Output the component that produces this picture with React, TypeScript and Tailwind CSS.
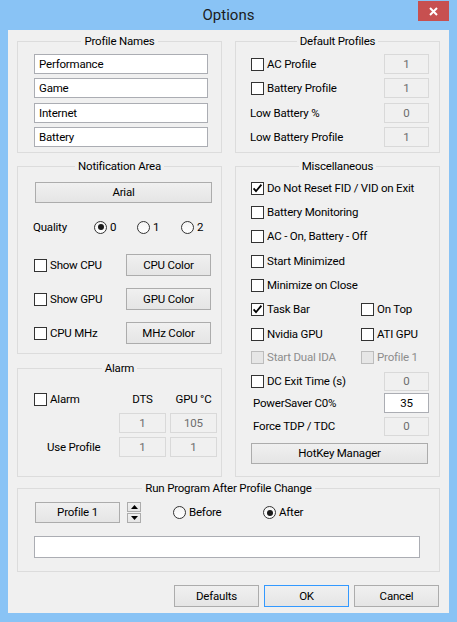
import React from 'react';

// Win8-style "Options" dialog

function CheckBox({ checked = false, disabled = false }: { checked?: boolean; disabled?: boolean }) {
  return (
    <span
      className={`flex h-[13px] w-[13px] shrink-0 items-center justify-center border ${
        disabled ? 'border-[#bcbcbc] bg-[#e6e6e6]' : 'border-[#333333] bg-white'
      }`}
    >
      {checked && (
        <svg width="11" height="11" viewBox="0 0 11 11">
          <path d="M1.6 5.4 L4 8.2 L9.4 1.6" fill="none" stroke="#000" strokeWidth="1.8" />
        </svg>
      )}
    </span>
  );
}

function CheckItem({
  label,
  checked,
  disabled,
  className = ''
}: {
  label: string;
  checked?: boolean;
  disabled?: boolean;
  className?: string;
}) {
  return (
    <label className={`flex items-center gap-[3px] whitespace-nowrap ${className}`}>
      <CheckBox checked={checked} disabled={disabled} />
      <span className={disabled ? 'text-[#8d8d8d]' : ''}>{label}</span>
    </label>
  );
}

function Radio({ checked = false }: { checked?: boolean }) {
  return (
    <span className="flex h-[13px] w-[13px] shrink-0 items-center justify-center rounded-full border border-[#333333] bg-linear-to-b from-[#f4f4f4] to-white">
      {checked && <span className="h-[6px] w-[6px] rounded-full bg-[#1a1a1a]" />}
    </span>
  );
}

function Btn({
  children,
  className = '',
  primary = false
}: {
  children: React.ReactNode;
  className?: string;
  primary?: boolean;
}) {
  return (
    <button
      className={`flex shrink-0 items-center justify-center border bg-linear-to-b from-[#f0f0f0] to-[#e5e5e5] text-black ${
        primary ? 'border-[#3399ff]' : 'border-[#acacac]'
      } ${className}`}
    >
      {children}
    </button>
  );
}

function Field({
  value = '',
  disabled = false,
  left = false,
  className = ''
}: {
  value?: string;
  disabled?: boolean;
  left?: boolean;
  className?: string;
}) {
  return (
    <div
      className={`flex shrink-0 items-center border ${
        disabled ? 'border-[#d9d9d9] bg-[#f0f0f0] text-[#6d6d6d]' : 'border-[#abadb3] bg-white text-black'
      } ${left ? 'justify-start pl-[4px]' : 'justify-center'} ${className}`}
    >
      {value}
    </div>
  );
}

function Group({ title, className = '', children }: { title: string; className?: string; children: React.ReactNode }) {
  return (
    <fieldset className={`min-w-0 border border-[#dcdcdc] ${className}`}>
      <legend className="mx-auto px-[3px] leading-[15px]">{title}</legend>
      {children}
    </fieldset>
  );
}

function Spin() {
  return (
    <div className="flex h-[21px] w-[14px] shrink-0 flex-col gap-px">
      <div className="flex flex-1 items-center justify-center border border-[#acacac] bg-linear-to-b from-[#f0f0f0] to-[#e5e5e5]">
        <svg width="7" height="4" viewBox="0 0 7 4">
          <path d="M0 4 L3.5 0 L7 4 Z" fill="#000" />
        </svg>
      </div>
      <div className="flex flex-1 items-center justify-center border border-[#acacac] bg-linear-to-b from-[#f0f0f0] to-[#e5e5e5]">
        <svg width="7" height="4" viewBox="0 0 7 4">
          <path d="M0 0 L7 0 L3.5 4 Z" fill="#000" />
        </svg>
      </div>
    </div>
  );
}

const nameGaps = ['', 'mt-[4px]', 'mt-[5px]', 'mt-[4px]'];
const profileNames = ['Performance', 'Game', 'Internet', 'Battery'];

const miscGaps = ['', 'mt-[4px]', 'mt-[4px]', 'mt-[5px]', 'mt-[4px]', 'mt-[4px]', 'mt-[5px]', 'mt-[3px]', 'mt-[4px]', 'mt-[2px]', 'mt-[3px]'];

export default function App() {
  return (
    <div className="flex h-[622px] w-[457px] flex-col bg-[#89c3f5] font-['Roboto','Liberation_Sans',sans-serif] text-[11.5px] leading-[15px] tracking-[-0.2px] text-black">
      {/* Title bar */}
      <div className="relative flex h-[30px] shrink-0 items-center justify-center">
        <span className="text-[15px] leading-[20px] tracking-normal text-[#1b1b1b]">Options</span>
        <div className="absolute top-[1px] right-[8px] flex h-[20px] w-[31px] items-center justify-center bg-[#c75050]">
          <svg width="9" height="9" viewBox="0 0 9 9">
            <path d="M1 1 L8 8 M8 1 L1 8" stroke="#fff" strokeWidth="2" />
          </svg>
        </div>
      </div>

      {/* Client area */}
      <div className="mx-[8px] flex h-[583px] flex-col bg-[#f0f0f0] px-[9px] pt-[4px]">
        <div className="grid grid-cols-2 gap-x-[13px]">
          <Group title="Profile Names" className="h-[119px]">
            <div className="flex flex-col pt-[5px] pl-[16px]">
              {profileNames.map((n, i) => (
                <Field key={n} value={n} left className={`h-[20px] w-[174px] ${nameGaps[i]}`} />
              ))}
            </div>
          </Group>

          <Group title="Default Profiles" className="h-[119px]">
            <div className="flex flex-col pt-[5px] pr-[10px] pl-[15px]">
              <div className="flex h-[20px] items-center justify-between">
                <CheckItem label="AC Profile" />
                <Field value="1" disabled className="h-[20px] w-[45px]" />
              </div>
              <div className="mt-[4px] flex h-[20px] items-center justify-between">
                <CheckItem label="Battery Profile" />
                <Field value="1" disabled className="h-[20px] w-[45px]" />
              </div>
              <div className="mt-[5px] flex h-[20px] items-center justify-between">
                <span className="-ml-px">Low Battery %</span>
                <Field value="0" disabled className="h-[20px] w-[45px]" />
              </div>
              <div className="mt-[4px] flex h-[20px] items-center justify-between">
                <span className="-ml-px">Low Battery Profile</span>
                <Field value="1" disabled className="h-[20px] w-[45px]" />
              </div>
            </div>
          </Group>
        </div>

        <div className="mt-[6px] grid grid-cols-2 gap-x-[13px]">
          <div className="flex flex-col gap-[7px]">
            <Group title="Notification Area" className="h-[195px]">
              <div className="flex flex-col pt-[8px] pl-[17px]">
                <Btn className="h-[21px] w-[177px]">Arial</Btn>
                <div className="mt-[14px] -ml-[2px] flex h-[20px] items-center">
                  <span className="w-[61px]">Quality</span>
                  <label className="flex w-[43px] items-center gap-[3px]">
                    <Radio checked />0
                  </label>
                  <label className="flex w-[44px] items-center gap-[3px]">
                    <Radio />1
                  </label>
                  <label className="flex items-center gap-[3px]">
                    <Radio />2
                  </label>
                </div>
                <div className="mt-[17px] -ml-px flex h-[22px] items-center">
                  <CheckItem label="Show CPU" className="w-[92px]" />
                  <Btn className="h-[22px] w-[85px]">CPU Color</Btn>
                </div>
                <div className="mt-[12px] -ml-px flex h-[22px] items-center">
                  <CheckItem label="Show GPU" className="w-[92px]" />
                  <Btn className="h-[22px] w-[85px]">GPU Color</Btn>
                </div>
                <div className="mt-[12px] -ml-px flex h-[22px] items-center">
                  <CheckItem label="CPU MHz" className="w-[92px]" />
                  <Btn className="h-[22px] w-[85px]">MHz Color</Btn>
                </div>
              </div>
            </Group>

            <Group title="Alarm" className="h-[116px]">
              <div className="grid auto-rows-[20px] grid-cols-[97px_47px_47px] items-center gap-x-[4px] gap-y-[4px] pt-[13px]">
                <CheckItem label="Alarm" className="pl-[16px]" />
                <span className="text-center">DTS</span>
                <span className="text-center">GPU °C</span>
                <span />
                <Field value="1" disabled className="h-[20px]" />
                <Field value="105" disabled className="h-[20px]" />
                <span className="pl-[29px]">Use Profile</span>
                <Field value="1" disabled className="h-[20px]" />
                <Field value="1" disabled className="h-[20px]" />
              </div>
            </Group>
          </div>

          <Group title="Miscellaneous" className="h-[318px]">
            <div className="flex flex-col pt-[4px] pr-[10px] pl-[15px]">
              <div className={`flex h-[20px] items-center ${miscGaps[0]}`}>
                <CheckItem label="Do Not Reset FID / VID on Exit" checked />
              </div>
              <div className={`flex h-[20px] items-center ${miscGaps[1]}`}>
                <CheckItem label="Battery Monitoring" />
              </div>
              <div className={`flex h-[20px] items-center ${miscGaps[2]}`}>
                <CheckItem label="AC - On, Battery - Off" />
              </div>
              <div className={`flex h-[20px] items-center ${miscGaps[3]}`}>
                <CheckItem label="Start Minimized" />
              </div>
              <div className={`flex h-[20px] items-center ${miscGaps[4]}`}>
                <CheckItem label="Minimize on Close" />
              </div>
              <div className={`flex h-[20px] items-center ${miscGaps[5]}`}>
                <CheckItem label="Task Bar" checked className="w-[110px]" />
                <CheckItem label="On Top" />
              </div>
              <div className={`flex h-[20px] items-center ${miscGaps[6]}`}>
                <CheckItem label="Nvidia GPU" className="w-[110px]" />
                <CheckItem label="ATI GPU" />
              </div>
              <div className={`flex h-[20px] items-center ${miscGaps[7]}`}>
                <CheckItem label="Start Dual IDA" disabled className="w-[110px]" />
                <CheckItem label="Profile 1" disabled />
              </div>
              <div className={`flex h-[20px] items-center justify-between ${miscGaps[8]}`}>
                <CheckItem label="DC Exit Time (s)" />
                <Field value="0" disabled className="h-[19px] w-[45px]" />
              </div>
              <div className={`flex h-[20px] items-center justify-between ${miscGaps[9]}`}>
                <span className="pl-[2px]">PowerSaver C0%</span>
                <Field value="35" className="h-[20px] w-[45px]" />
              </div>
              <div className={`flex h-[20px] items-center justify-between ${miscGaps[10]}`}>
                <span className="pl-[2px]">Force TDP / TDC</span>
                <Field value="0" disabled className="h-[19px] w-[45px]" />
              </div>
              <Btn className="mt-[7px] h-[21px] w-[177px]">HotKey Manager</Btn>
            </div>
          </Group>
        </div>

        <Group title="Run Program After Profile Change" className="mt-[4px] h-[91px]">
          <div className="flex flex-col pt-[6px] pl-[16px]">
            <div className="flex h-[21px] items-center">
              <Btn className="ml-px h-[21px] w-[85px]">Profile 1</Btn>
              <div className="ml-[7px]">
                <Spin />
              </div>
              <label className="ml-[32px] flex w-[90px] items-center gap-[3px]">
                <Radio />
                Before
              </label>
              <label className="flex items-center gap-[3px]">
                <Radio checked />
                After
              </label>
            </div>
            <Field className="mt-[13px] h-[22px] w-[386px]" />
          </div>
        </Group>

        <div className="mt-[13px] flex justify-end gap-[5px] pr-[1px]">
          <Btn className="h-[22px] w-[85px]">Defaults</Btn>
          <Btn primary className="h-[22px] w-[85px]">
            OK
          </Btn>
          <Btn className="h-[22px] w-[85px]">Cancel</Btn>
        </div>
      </div>
    </div>
  );
}
